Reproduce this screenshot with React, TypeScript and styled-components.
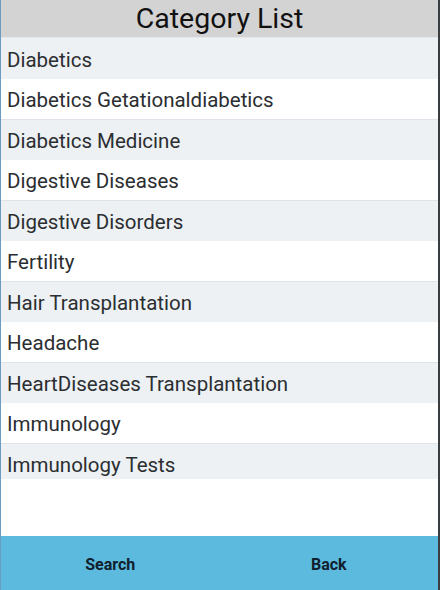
import styled, { createGlobalStyle } from "styled-components";

const GlobalStyle = createGlobalStyle`
  html, body {
    margin: 0;
    padding: 0;
    background: #fff;
  }
  #root {
    height: 590px;
  }
`;

const categories = [
  "Diabetics",
  "Diabetics Getationaldiabetics",
  "Diabetics Medicine",
  "Digestive Diseases",
  "Digestive Disorders",
  "Fertility",
  "Hair Transplantation",
  "Headache",
  "HeartDiseases Transplantation",
  "Immunology",
  "Immunology Tests",
];

const Screen = styled.div`
  height: 590px;
  display: flex;
  flex-direction: column;
  font-family: Roboto, "Liberation Sans", sans-serif;
  border-left: 1px solid #6a9cbf;
  border-right: 2px solid #3a3d40;
  box-sizing: border-box;
  background: #fff;
`;

const Header = styled.header`
  height: 37px;
  background: #d3d3d3;
  display: flex;
  align-items: center;
  justify-content: center;
  font-size: 28.5px;
  color: #111;
  border-bottom: 1px solid #e4e8eb;
`;

const Body = styled.div`
  flex: 1;
`;

const List = styled.ul`
  list-style: none;
  margin: 0;
  padding: 0;
  height: 441px;
  overflow: hidden;
`;

const Row = styled.li<{ $shaded: boolean }>`
  height: 40.5px;
  box-sizing: border-box;
  display: flex;
  align-items: center;
  padding: 3px 6px 0;
  font-size: 20.5px;
  color: #2b2e31;
  background: ${({ $shaded }) => ($shaded ? "#edf1f4" : "#fff")};
  border-top: ${({ $shaded }) => ($shaded ? "1px solid #dde3e8" : "none")};

  &:first-child {
    border-top: none;
  }
`;

const Footer = styled.footer`
  height: 54px;
  background: #5bbadd;
  display: grid;
  grid-template-columns: 1fr 1fr;
`;

const FooterButton = styled.button`
  border: none;
  background: transparent;
  font-family: Roboto, "Liberation Sans", sans-serif;
  font-weight: bold;
  font-size: 16px;
  color: #10202e;
  padding: 2px 0 0;
  cursor: pointer;
`;

export default function App() {
  return (
    <>
      <GlobalStyle />
      <Screen>
        <Header>Category List</Header>
        <Body>
          <List>
            {categories.map((c, i) => (
              <Row key={c} $shaded={i % 2 === 0}>
                {c}
              </Row>
            ))}
          </List>
        </Body>
        <Footer>
          <FooterButton>Search</FooterButton>
          <FooterButton>Back</FooterButton>
        </Footer>
      </Screen>
    </>
  );
}
